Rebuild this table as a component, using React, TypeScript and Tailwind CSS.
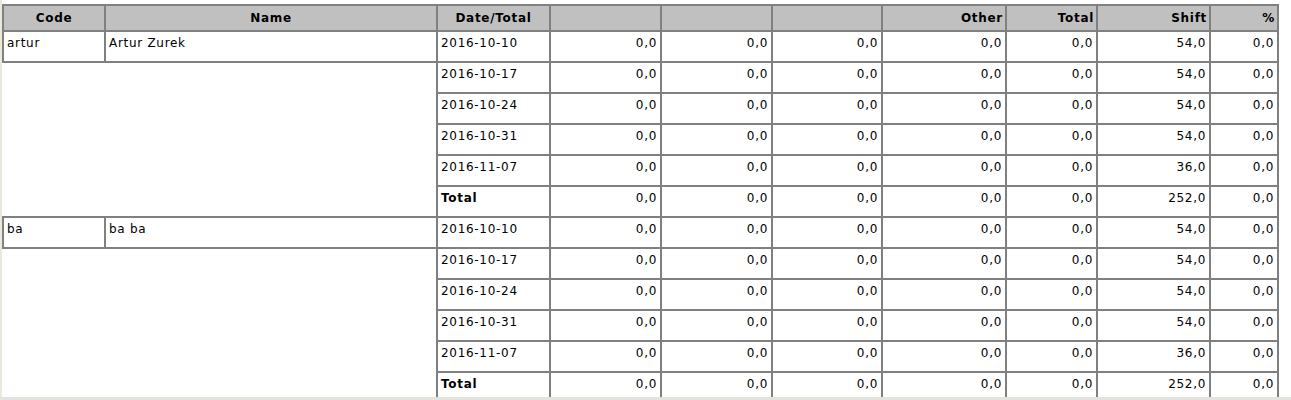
import React from "react";

type Group = { code: string; name: string; rows: { date: string; shift: string }[]; total: string };

const groups: Group[] = [
  {
    code: "artur",
    name: "Artur Zurek",
    rows: [
      { date: "2016-10-10", shift: "54,0" },
      { date: "2016-10-17", shift: "54,0" },
      { date: "2016-10-24", shift: "54,0" },
      { date: "2016-10-31", shift: "54,0" },
      { date: "2016-11-07", shift: "36,0" },
    ],
    total: "252,0",
  },
  {
    code: "ba",
    name: "ba ba",
    rows: [
      { date: "2016-10-10", shift: "54,0" },
      { date: "2016-10-17", shift: "54,0" },
      { date: "2016-10-24", shift: "54,0" },
      { date: "2016-10-31", shift: "54,0" },
      { date: "2016-11-07", shift: "36,0" },
    ],
    total: "252,0",
  },
];

const cell = "border-2 border-[#808080] px-[3px] pt-[4px] align-top h-[31px] whitespace-nowrap leading-[15px]";
const num = cell + " text-right";
const th = "border-2 border-[#808080] bg-[#c0c0c0] font-bold h-[26px] px-[2px] align-middle leading-[15px]";

const Nums = ({ shift }: { shift: string }) => (
  <>
    <td className={num}>0,0</td>
    <td className={num}>0,0</td>
    <td className={num}>0,0</td>
    <td className={num}>0,0</td>
    <td className={num}>0,0</td>
    <td className={num}>{shift}</td>
    <td className={num}>0,0</td>
  </>
);

export default function App() {
  return (
    <div
      className="h-[400px] bg-white pl-[2px] pt-[4px] text-[12px] tracking-[0.7px] text-black relative overflow-hidden"
      style={{ fontFamily: '"DejaVu Sans", Verdana, sans-serif' }}
    >
      <div className="absolute left-0 top-0 bottom-0 w-[2px] bg-[#ece9d8]" />
      <table className="table-fixed border-collapse w-[1276px]">
        <colgroup>
          <col className="w-[102px]" />
          <col className="w-[332px]" />
          <col className="w-[113px]" />
          <col className="w-[111px]" />
          <col className="w-[111px]" />
          <col className="w-[110px]" />
          <col className="w-[124px]" />
          <col className="w-[91px]" />
          <col className="w-[113px]" />
          <col className="w-[68px]" />
        </colgroup>
        <thead>
          <tr>
            <th className={th + " text-center"}>Code</th>
            <th className={th + " text-center"}>Name</th>
            <th className={th + " text-center"}>Date/Total</th>
            <th className={th}></th>
            <th className={th}></th>
            <th className={th}></th>
            <th className={th + " text-right"}>Other</th>
            <th className={th + " text-right"}>Total</th>
            <th className={th + " text-right"}>Shift</th>
            <th className={th + " text-right"}>%</th>
          </tr>
        </thead>
        <tbody>
          {groups.map((g) => (
            <React.Fragment key={g.code}>
              {g.rows.map((r, i) => (
                <tr key={r.date}>
                  {i === 0 && (
                    <>
                      <td className={cell}>{g.code}</td>
                      <td className={cell}>{g.name}</td>
                    </>
                  )}
                  {i === 1 && <td colSpan={2} rowSpan={5} className="border-0 bg-white" />}
                  <td className={cell}>{r.date}</td>
                  <Nums shift={r.shift} />
                </tr>
              ))}
              <tr>
                <td className={cell + " font-bold"}>Total</td>
                <Nums shift={g.total} />
              </tr>
            </React.Fragment>
          ))}
        </tbody>
      </table>
      <div className="absolute left-0 right-0 bottom-0 h-[3px] bg-[#e4e2dc]" />
    </div>
  );
}
